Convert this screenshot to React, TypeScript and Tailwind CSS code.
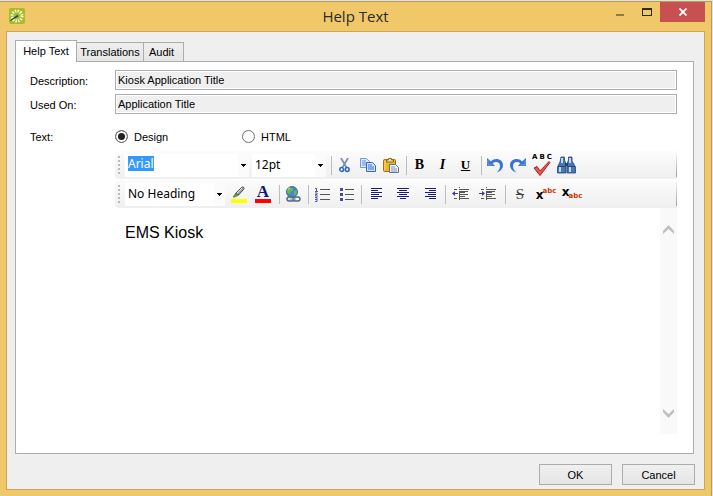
import type { ReactNode } from "react";

const ui = "font-['Liberation_Sans',Arial,sans-serif] text-[11px] leading-[14px]";
const navy = "#1c1c78";

function Sep({ tight = false }: { tight?: boolean }) {
  return <span className={`mr-px h-[19px] w-px shrink-0 bg-[#bcbcbc] ${tight ? "ml-px" : "ml-1"}`} />;
}

function Tool({ label, width = "w-[23px]", children }: { label: string; width?: string; children: ReactNode }) {
  return (
    <button type="button" aria-label={label} className={`flex h-6 shrink-0 items-center justify-center ${width}`}>
      {children}
    </button>
  );
}

function Grip() {
  return (
    <svg className="mr-[4px] ml-[3px] shrink-0" width="3" height="20" viewBox="0 0 3 20" fill="#b9b9b9" aria-hidden="true">
      {[1, 5, 9, 13, 17].map((y) => (
        <rect key={y} x="0" y={y} width="2" height="2" />
      ))}
    </svg>
  );
}

function Combo({ label, value, width, selected = false }: { label: string; value: string; width: string; selected?: boolean }) {
  return (
    <div className={`flex h-[23px] shrink-0 items-center justify-between bg-white pl-[3px] ${width}`}>
      <select
        aria-label={label}
        className={`appearance-none font-['Noto_Sans','Open_Sans',sans-serif] text-[12px] leading-[15px] outline-none ${
          selected ? "mb-1 h-[15px] w-[26px] bg-[#3399ff] text-white" : "mb-0.5 h-[17px] flex-1 text-black"
        }`}
      >
        <option>{value}</option>
      </select>
      <span className="flex h-full w-[11px] items-center justify-center bg-[#fbfbfb]">
        <svg width="5" height="3" viewBox="0 0 5 3" shapeRendering="crispEdges" aria-hidden="true">
          <path d="M0 0H5V1H4V2H3V3H2V2H1V1H0Z" />
        </svg>
      </span>
    </div>
  );
}

function Toolbar({ label, children }: { label: string; children: ReactNode }) {
  return (
    <div
      role="toolbar"
      aria-label={label}
      className="flex h-7 items-center rounded-l-sm bg-linear-to-b from-[#fcfcfc] to-[#efefef]"
    >
      {children}
      <span className="ml-auto h-6 w-px bg-linear-to-b from-[#f4f4f4] to-[#9c9c9c]" />
    </div>
  );
}

function Lines({ rows }: { rows: [number, number][] }) {
  return (
    <svg width="13" height="12" viewBox="0 0 13 12" fill={navy} shapeRendering="crispEdges" aria-hidden="true">
      {rows.map(([x, w], i) => (
        <rect key={i} x={x} y={i * 2} width={w} height="1" />
      ))}
    </svg>
  );
}

function Dent({ flip = false }: { flip?: boolean }) {
  return (
    <svg width="17" height="14" viewBox="0 0 17 14" aria-hidden="true">
      <g fill="#555" shapeRendering="crispEdges">
        <rect x="7" y="2" width="10" height="1" />
        <rect x="7" y="4" width="9" height="1" />
        <rect x="7" y="5" width="6" height="1" />
        <rect x="7" y="7" width="9" height="1" />
        <rect x="7" y="9" width="6" height="1" />
        <rect x="2" y="2" width="3" height="1" />
        <rect x="2" y="11" width="3" height="1" />
        <rect x="7" y="11" width="10" height="1" />
      </g>
      <path d="M7.5 0V14" stroke="#555" strokeDasharray="1 1" />
      {flip ? <path d="M6 6.5 3 4v2H0v1h3v2z" fill="#3d3da8" /> : <path d="M0 6.5 3 4v2h3v1H3v2z" fill="#3d3da8" />}
    </svg>
  );
}

function Undo({ flip = false }: { flip?: boolean }) {
  return (
    <svg width="16" height="16" viewBox="0 0 16 16" className={flip ? "-scale-x-100" : ""} aria-hidden="true">
      <path d="M0 1v8h8L5.600 6.200C9 3.600 13 5 13 9c0 3-1.500 5-3.500 6.500C13 14.500 16 12 16 8c0-6-8-8-12-3.600z" fill="#3874d8" />
      <path d="M1 3v5h4.500" fill="none" stroke="#6fa2ee" />
    </svg>
  );
}

function Field({ id, label, value }: { id: string; label: string; value: string }) {
  return (
    <div className="flex h-5 items-center">
      <label htmlFor={id} className="w-[85px] shrink-0 pt-0.5">
        {label}
      </label>
      <input
        id={id}
        readOnly
        value={value}
        className="h-5 min-w-0 flex-1 border border-[#abadb3] bg-[#efefef] pl-0.5 shadow-[inset_0_0_0_1px_white] outline-none"
      />
    </div>
  );
}

function Choice({ id, label, checked = false }: { id: string; label: string; checked?: boolean }) {
  return (
    <div className="flex w-[127px] items-center gap-1.5">
      <input
        id={id}
        type="radio"
        name="mode"
        defaultChecked={checked}
        className="size-[13px] appearance-none rounded-full border border-[#707070] bg-white checked:bg-[#222] checked:shadow-[inset_0_0_0_2px_white]"
      />
      <label htmlFor={id}>{label}</label>
    </div>
  );
}

export default function App() {
  return (
    <div className={`min-h-screen bg-[#dfe3e0] pt-px pr-px text-black ${ui}`}>
      <div className="flex min-h-[calc(100vh-1px)] flex-col border-t border-r border-[#b99c5b] bg-[#f0c769] pr-1.5 pb-1.5 pl-1.5">
        <header className="flex h-[29px] shrink-0 items-start">
          <div className="w-[100px] pt-[6px] pl-[3px]">
            <svg width="16" height="16" viewBox="0 0 16 16" aria-hidden="true">
              <rect width="16" height="16" rx="2" fill="#a9bd20" />
              <circle cx="8" cy="8" r="5" fill="none" stroke="#fff" strokeWidth="3" strokeDasharray="1.300 1.318" />
              <path d="M1.500 12.500 8.500 7.200l.5 1z" fill="#17485e" stroke="#17485e" strokeWidth=".8" />
            </svg>
          </div>
          <h1 className="flex-1 pt-1 text-center font-['Open_Sans','Noto_Sans',sans-serif] text-[15px] leading-5 text-[#2b2b2b]">
            Help Text
          </h1>
          <div className="flex w-[100px] justify-end">
            <button type="button" aria-label="Minimize" className="flex h-5 w-[27px] items-center justify-center">
              <span className="mt-[5px] h-0.5 w-2 bg-[#917a48]" />
            </button>
            <button type="button" aria-label="Maximize" className="flex h-5 w-[27px] items-center justify-center">
              <span className="h-2 w-2.5 border border-t-2 border-[#2b2b2b]" />
            </button>
            <button type="button" aria-label="Close" className="flex h-5 w-[45px] items-center justify-center bg-[#c75050]">
              <svg width="8" height="8" viewBox="0 0 8 8" aria-hidden="true">
                <path d="M.5.5l7 7M7.500.5l-7 7" stroke="#fff" strokeWidth="1.800" />
              </svg>
            </button>
          </div>
        </header>

        <main className="flex flex-1 flex-col border border-[#c9a656] bg-[#efefef] px-2 pt-2 pb-1">
          <div role="tablist" className="relative z-10 flex items-end">
            <button role="tab" aria-selected="true" className="-mb-px h-[22px] w-[62px] border border-b-0 border-[#acacac] bg-white pb-0.5">
              Help Text
            </button>
            <button role="tab" aria-selected="false" className="h-[19px] w-[67px] border border-b-0 border-l-0 border-[#acacac] bg-linear-to-b from-[#efefef] to-[#e5e5e5]">
              Translations
            </button>
            <button role="tab" aria-selected="false" className="h-[19px] w-10 border border-b-0 border-l-0 border-[#acacac] bg-linear-to-b from-[#efefef] to-[#e5e5e5] pr-1">
              Audit
            </button>
          </div>

          <section className="mr-0.5 flex flex-1 flex-col border border-[#acacac] bg-white pt-2 pr-4 pb-[19px] pl-3.5">
            <div className="flex flex-col gap-1">
              <Field id="description" label="Description:" value="Kiosk Application Title" />
              <Field id="used-on" label="Used On:" value="Application Title" />
            </div>

            <div role="radiogroup" aria-label="Text" className="mt-[15px] flex h-[15px] items-center">
              <span className="w-[85px]">Text:</span>
              <Choice id="design" label="Design" checked />
              <Choice id="html" label="HTML" />
            </div>

            <div className="mt-[7px] ml-[85px] flex flex-1 flex-col">
              <div className="flex flex-col gap-px">
                <Toolbar label="Edit">
                  <Grip />
                  <Combo label="Font" value="Arial" width="w-[124px]" selected />
                  <span className="w-[3px]" />
                  <Combo label="Font size" value="12pt" width="w-[74px]" />
                  <span className="w-px" />
                  <Sep />
                  <Tool label="Cut">
                    <svg width="11" height="15" viewBox="0 0 11 15" fill="none" aria-hidden="true">
                      <path d="M2 0 7.500 9.500M9 0 3.500 9.500" stroke="#7d8fa8" strokeWidth="1.700" />
                      <circle cx="2.700" cy="11.500" r="1.900" stroke="#2f62c0" strokeWidth="1.500" />
                      <circle cx="8.200" cy="11.500" r="1.900" stroke="#2f62c0" strokeWidth="1.500" />
                    </svg>
                  </Tool>
                  <Tool label="Copy">
                    <svg width="16" height="14" viewBox="0 0 16 14" aria-hidden="true">
                      <path d="M.5.5h6l3 3v6h-9z" fill="#dceafe" stroke="#6f9ad8" />
                      <path d="M2 3h4M2 5h5M2 7h5" stroke="#5f8ed6" />
                      <path d="M6.500 4.500h6l3 3v6h-9z" fill="#cfe1fb" stroke="#3468b8" />
                      <path d="M8 7h4M8 9h6M8 11h6" stroke="#3c70c4" />
                    </svg>
                  </Tool>
                  <Tool label="Paste">
                    <svg width="16" height="15" viewBox="0 0 16 15" aria-hidden="true">
                      <rect x=".5" y="1.500" width="12" height="12" rx="1" fill="#eeb422" stroke="#a36f13" />
                      <path d="M2 3v9" stroke="#ffe07a" />
                      <path d="M3.500 4V2h2V.5h3V2h2v2z" fill="#f4e3a0" stroke="#8a6a24" />
                      <path d="M6.500 6.500h6l3 3v5h-9z" fill="#e8eff8" stroke="#60738f" />
                      <path d="M8 9h4M8 11h6M8 13h6" stroke="#8797ae" />
                    </svg>
                  </Tool>
                  <Sep />
                  <Tool label="Bold">
                    <b className="font-['Liberation_Serif',serif] text-[14px] leading-4">B</b>
                  </Tool>
                  <Tool label="Italic">
                    <b className="font-['Liberation_Serif',serif] text-[14px] leading-4 italic">I</b>
                  </Tool>
                  <Tool label="Underline">
                    <b className="font-['Liberation_Serif',serif] text-[13px] leading-4 underline">U</b>
                  </Tool>
                  <Sep />
                  <Tool label="Undo"><Undo /></Tool>
                  <Tool label="Redo"><Undo flip /></Tool>
                  <Tool label="Check spelling" width="w-[26px]">
                    <span className="flex flex-col items-center">
                      <span className="flex gap-0.5 font-['DejaVu_Sans',sans-serif] text-[7px] leading-[7px] font-bold">
                        <span>A</span><span>B</span><span>C</span>
                      </span>
                      <svg width="18" height="15" viewBox="0 0 18 15" aria-hidden="true">
                        <path d="M1 7 4 5.500 7 10 16 .5 17 1.500 7 14.500z" fill="#ef5555" stroke="#a51c1c" />
                      </svg>
                    </span>
                  </Tool>
                  <Tool label="Find">
                    <svg width="19" height="18" viewBox="0 0 19 18" aria-hidden="true">
                      <path d="M4 1h3.500v3L9 8v9H.5v-6L3 6zM11.500 1H15v4l3.500 6v6H10V8l1.500-4z" fill="#4a76b2" stroke="#1f4478" strokeWidth=".8" />
                      <path d="M8 7h3v3H8z" fill="#1f4478" />
                      <path d="M3 11v5M13 11v5M5 2v5M13 2v5" stroke="#c3d8f2" strokeWidth="2" />
                      <path d="M1 10.500h7.500M10.500 10.500H18" stroke="#1f4478" />
                    </svg>
                  </Tool>
                </Toolbar>

                <Toolbar label="Format">
                  <Grip />
                  <Combo label="Heading" value="No Heading" width="w-[100px]" />
                  <span className="w-0.5" />
                  <Tool label="Highlight" width="w-6">
                    <svg width="16" height="17" viewBox="0 0 16 17" aria-hidden="true">
                      <rect y="13" width="16" height="4" fill="#ff0" />
                      <path d="M4.500 7.500 10 2c2-2 4-.5 2.500 1.500L7.500 9z" fill="#9aa89c" stroke="#3e4756" />
                      <path d="M6 7l5-5" stroke="#e8f0e8" />
                      <path d="m2 11 2.500-3.500L7.500 9 4 11z" fill="#56a12f" stroke="#4d633e" strokeWidth=".6" />
                    </svg>
                  </Tool>
                  <Tool label="Font color" width="w-6">
                    <span className="flex h-[17px] w-4 items-end justify-center border-b-4 border-[#f00] font-['Liberation_Serif',serif] text-[17px] leading-[14px] font-bold text-[#14147c]">
                      A
                    </span>
                  </Tool>
                  <Sep />
                  <Tool label="Insert link">
                    <svg width="16" height="17" viewBox="0 0 16 17" aria-hidden="true">
                      <circle cx="7" cy="6" r="5.500" fill="#4387ca" stroke="#4a688d" />
                      <path d="M3 3c3-3 6-1 5 1s-3 1-3 4C2 8 1 5 3 3zM9 5l3-1c.5 3-1 5-3 6z" fill="#61bd53" />
                      <path d="M3 3.500 5 2" stroke="#d4efe9" />
                      <rect x="2" y="11" width="7" height="4" rx="2" fill="#dce3ed" stroke="#50647f" strokeWidth="1.400" />
                      <rect x="8" y="11" width="7" height="4" rx="2" fill="none" stroke="#50647f" strokeWidth="1.400" />
                      <path d="M5 13h6" stroke="#91a1b5" strokeWidth="1.200" />
                    </svg>
                  </Tool>
                  <Sep />
                  <Tool label="Numbered list" width="w-[25px]">
                    <svg width="15" height="15" viewBox="0 0 15 15" fill="none" aria-hidden="true">
                      <path d="M5 2.500h10M5 7.500h10M5 12.500h10" stroke="#555" />
                      <path d="M0 1.500h1.500V4M0 4.500h3M0 6h2v1.500H.5V9H3M0 10.500h2v4H0M0 12.500h2" stroke="#5454b0" />
                    </svg>
                  </Tool>
                  <Tool label="Bulleted list" width="w-[25px]">
                    <svg width="15" height="14" viewBox="0 0 15 14" shapeRendering="crispEdges" aria-hidden="true">
                      <path d="M0 1h3v3H0zM0 6h3v3H0zM0 11h3v3H0z" fill="#4747a8" />
                      <path d="M5 2h9v1H5zM5 7h9v1H5zM5 12h9v1H5z" fill="#555" />
                    </svg>
                  </Tool>
                  <Sep tight />
                  <Tool label="Align left" width="w-[27px]">
                    <Lines rows={[[1, 11], [1, 7], [1, 11], [1, 8], [1, 11], [1, 7]]} />
                  </Tool>
                  <Tool label="Align center" width="w-[27px]">
                    <Lines rows={[[0, 12], [2, 8], [0, 12], [2, 8], [0, 12], [3, 6]]} />
                  </Tool>
                  <Tool label="Align right" width="w-[27px]">
                    <Lines rows={[[1, 11], [5, 7], [1, 11], [4, 8], [1, 11], [5, 7]]} />
                  </Tool>
                  <Sep tight />
                  <Tool label="Decrease indent" width="w-[27px]"><Dent /></Tool>
                  <Tool label="Increase indent" width="w-[27px]"><Dent flip /></Tool>
                  <Sep />
                  <Tool label="Strikethrough" width="w-[26px]">
                    <span className="font-['Liberation_Serif',serif] text-[15px] leading-4 text-[#444] line-through">S</span>
                  </Tool>
                  <Tool label="Superscript" width="w-[26px]">
                    <span className="flex h-4 items-end font-['DejaVu_Sans',sans-serif] font-bold">
                      <span className="text-[12px] leading-[14px]">x</span>
                      <span className="mb-[6px] -ml-px text-[7px] leading-[9px] text-[#cc3300]">abc</span>
                    </span>
                  </Tool>
                  <Tool label="Subscript" width="w-[26px]">
                    <span className="flex h-4 items-start font-['DejaVu_Sans',sans-serif] font-bold">
                      <span className="text-[12px] leading-[12px]">x</span>
                      <span className="mt-[6px] -ml-px text-[7px] leading-[9px] text-[#cc3300]">abc</span>
                    </span>
                  </Tool>
                </Toolbar>
              </div>

              <div className="flex flex-1">
                <textarea
                  aria-label="Help text"
                  defaultValue="EMS Kiosk"
                  className="min-w-0 flex-1 resize-none overflow-hidden bg-white px-2.5 pt-4 text-[16px] leading-[18px] outline-none"
                />
                <div className="flex w-[17px] flex-col justify-between bg-[#f9f9f9] pt-3.5 pb-3.5">
                  <button type="button" aria-label="Scroll up" className="flex h-3.5 items-center justify-center">
                    <svg width="11" height="9" viewBox="0 0 11 9" aria-hidden="true">
                      <path d="M0 6 5.500 0 11 6v3L5.500 4 0 9z" fill="#bfbfbf" />
                    </svg>
                  </button>
                  <button type="button" aria-label="Scroll down" className="flex h-3.5 items-center justify-center">
                    <svg width="11" height="9" viewBox="0 0 11 9" aria-hidden="true">
                      <path d="M0 3 5.500 9 11 3V0L5.500 5 0 0z" fill="#bfbfbf" />
                    </svg>
                  </button>
                </div>
              </div>
            </div>
          </section>

          <footer className="mt-2.5 flex justify-end gap-2.5 pr-px">
            <button type="button" className="h-[21px] w-[73px] border border-[#acacac] bg-linear-to-b from-[#f0f0f0] to-[#e5e5e5]">
              OK
            </button>
            <button type="button" className="h-[21px] w-[73px] border border-[#acacac] bg-linear-to-b from-[#f0f0f0] to-[#e5e5e5]">
              Cancel
            </button>
          </footer>
        </main>
      </div>
    </div>
  );
}
